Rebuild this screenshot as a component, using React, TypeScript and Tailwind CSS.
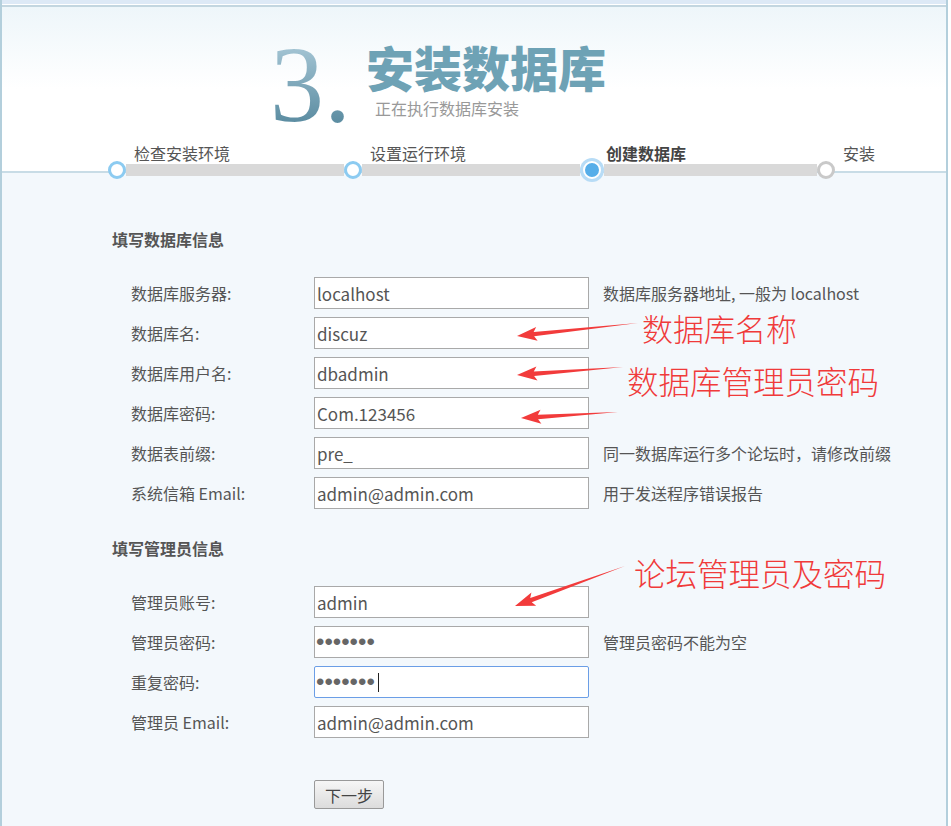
import React from "react";

const font = { fontFamily: '"Noto Sans CJK SC", "Noto Sans", sans-serif' };

type Row = { label: string; value: string; hint?: string; password?: boolean; focused?: boolean };

const dbRows: Row[] = [
  { label: "数据库服务器:", value: "localhost", hint: "数据库服务器地址, 一般为 localhost" },
  { label: "数据库名:", value: "discuz" },
  { label: "数据库用户名:", value: "dbadmin" },
  { label: "数据库密码:", value: "Com.123456" },
  { label: "数据表前缀:", value: "pre_", hint: "同一数据库运行多个论坛时，请修改前缀" },
  { label: "系统信箱 Email:", value: "admin@admin.com", hint: "用于发送程序错误报告" },
];

const adminRows: Row[] = [
  { label: "管理员账号:", value: "admin" },
  { label: "管理员密码:", value: "•••••••", password: true, hint: "管理员密码不能为空" },
  { label: "重复密码:", value: "•••••••", password: true, focused: true },
  { label: "管理员 Email:", value: "admin@admin.com" },
];

// tail -> head
const arrows = [
  [638, 323, 517, 336],
  [623, 367, 517, 375],
  [618, 412, 521, 418],
  [625, 566, 515, 606],
];

function arrowPoints(tx: number, ty: number, hx: number, hy: number) {
  const dx = hx - tx;
  const dy = hy - ty;
  const len = Math.hypot(dx, dy);
  const ux = dx / len;
  const uy = dy / len;
  const px = -uy;
  const py = ux;
  const headLen = 17;
  const bx = hx - ux * headLen;
  const by = hy - uy * headLen;
  const neck = 2.2;
  const barb = 7;
  const pts = [
    [tx, ty],
    [bx + px * neck, by + py * neck],
    [bx + px * barb - ux * 3, by + py * barb - uy * 3],
    [hx, hy],
    [bx - px * barb - ux * 3, by - py * barb - uy * 3],
    [bx - px * neck, by - py * neck],
  ];
  return pts.map((p) => p.join(",")).join(" ");
}

function FormRow({ row }: { row: Row }) {
  return (
    <div className="flex items-center h-8">
      <div className="w-[202px] pl-[19px] text-[16px] text-[#555]">{row.label}</div>
      <div className="relative">
        <input
          readOnly
          type="text"
          value={row.value}
          className={`block w-[275px] h-8 bg-white outline-none ${
            row.password ? "px-[1px] text-[24px] text-[#666]" : "px-[2px] text-[17px] text-[#555]"
          } ${row.focused ? "border border-[#6b9ee6] rounded-[2px]" : "border border-[#a9a9a9]"}`}
          style={row.password ? { fontFamily: '"Liberation Sans", sans-serif' } : font}
        />
        {row.focused && <div className="absolute left-[64px] top-[7px] w-[1px] h-[19px] bg-[#222]" />}
      </div>
      {row.hint && <div className="ml-[14px] text-[16px] text-[#555]">{row.hint}</div>}
    </div>
  );
}

function Dot({ kind }: { kind: "done" | "active" | "todo" }) {
  if (kind === "active") {
    return (
      <div className="w-6 h-6 shrink-0 rounded-full bg-[#b7dcf6] p-[3px]">
        <div className="w-full h-full rounded-full border-2 border-white bg-[#56aee9]" />
      </div>
    );
  }
  return (
    <div
      className={`w-[18px] h-[18px] shrink-0 rounded-full border-[3px] bg-white ${
        kind === "done" ? "border-[#8ccbf1]" : "border-[#c9c9c9]"
      }`}
    />
  );
}

export default function App() {
  return (
    <div className="relative w-[951px] h-[826px] overflow-hidden bg-white" style={font}>
      <div className="w-[948px] h-full border-x-2 border-[#b3cfdc] bg-[#f3f8fc] flex flex-col">
        {/* top strip */}
        <div className="h-[4px] bg-[#dde9f6]" />
        <div className="h-[1px] bg-white" />
        <div className="h-[2px] bg-[#c3d6e0]" />

        {/* header */}
        <div className="bg-gradient-to-b from-[#eef6fa] via-white to-white border-b-2 border-[#c8dce6]">
          <div className="flex items-start h-[132px]">
            <div
              className="ml-[268px] mt-[24px] text-[108px] leading-none bg-gradient-to-b from-[#b2d0de] to-[#4c8197] bg-clip-text text-transparent"
              style={{ fontFamily: '"Liberation Serif", serif' }}
            >
              3.
            </div>
            <div className="ml-[15px] mt-[29px] flex flex-col">
              <div className="text-[48px] leading-[60px] font-black text-[#6ea2b5]">安装数据库</div>
              <div className="ml-[9px] mt-[2px] text-[16px] leading-[20px] text-[#999]">正在执行数据库安装</div>
            </div>
          </div>

          <div className="flex h-[20px] mt-[4px] ml-[132px] text-[16px] leading-[20px] text-[#555]">
            <div className="w-[236px]">检查安装环境</div>
            <div className="w-[236px]">设置运行环境</div>
            <div className="w-[237px] font-bold text-[#444]">创建数据库</div>
            <div>安装</div>
          </div>

          <div className="relative z-10 flex items-center h-[12px] mt-[1px] -mb-[5px] ml-[106px]">
            <Dot kind="done" />
            <div className="w-[218px] h-[12px] bg-[#d9d9d9]" />
            <Dot kind="done" />
            <div className="w-[218px] h-[12px] bg-[#d9d9d9]" />
            <Dot kind="active" />
            <div className="w-[213px] h-[12px] bg-[#d9d9d9]" />
            <Dot kind="todo" />
          </div>
        </div>

        {/* form */}
        <div className="flex flex-col pl-[110px]">
          <div className="mt-[56px] text-[16px] leading-[20px] font-bold text-[#555]">填写数据库信息</div>
          <div className="mt-[28px] flex flex-col gap-2">
            {dbRows.map((r) => (
              <FormRow key={r.label} row={r} />
            ))}
          </div>

          <div className="mt-[29px] text-[16px] leading-[20px] font-bold text-[#555]">填写管理员信息</div>
          <div className="mt-[28px] flex flex-col gap-2">
            {adminRows.map((r) => (
              <FormRow key={r.label} row={r} />
            ))}
          </div>

          <div className="mt-[42px] ml-[202px]">
            <button className="w-[70px] h-[29px] border border-[#999] rounded-[2px] bg-gradient-to-b from-[#f6f6f6] to-[#dcdcdc] text-[16px] text-[#444]">
              下一步
            </button>
          </div>
        </div>
      </div>

      {/* annotations */}
      <svg className="absolute inset-0 pointer-events-none" width={951} height={826}>
        {arrows.map((a, i) => (
          <polygon key={i} points={arrowPoints(a[0], a[1], a[2], a[3])} fill="#f23b3b" />
        ))}
      </svg>
      <div className="absolute left-[642px] top-[312px] text-[31px] leading-none font-light text-[#f03a3a]">数据库名称</div>
      <div className="absolute left-[627px] top-[365px] text-[31.5px] leading-none font-light text-[#f03a3a]">数据库管理员密码</div>
      <div className="absolute left-[634px] top-[557px] text-[31.5px] leading-none font-light text-[#f03a3a]">论坛管理员及密码</div>
    </div>
  );
}
